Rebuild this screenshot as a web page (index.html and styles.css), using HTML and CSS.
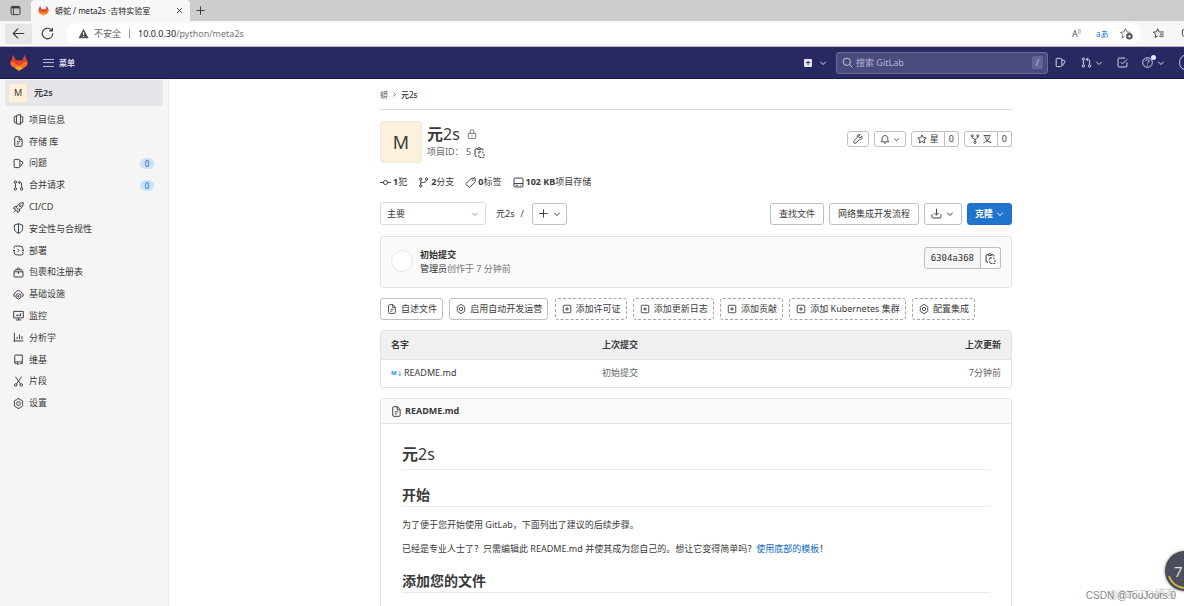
FILE: index.html
```html
<!DOCTYPE html>
<html lang="zh-CN">
<head>
<meta charset="utf-8">
<title>蟒蛇 / meta2s ·吉特实验室</title>
<link rel="stylesheet" href="styles.css">
</head>
<body>
<svg class="sprite" aria-hidden="true">
  <symbol id="tanuki" viewBox="0 0 24 22"><path fill="#e24329" d="M4.500.5 7.500 8h9L19.500.5 23 9.500 12 16 1 9.500z"/><path fill="#fc6d26" d="M1 9.300c-1.200 3.200 0 5.700 2.300 7.500L12 22l8.700-5.200c2.300-1.800 3.500-4.300 2.300-7.500-2.500.3-4 1.200-5.500 2.200L12 15.500 6.500 11.500C5 10.500 3.500 9.600 1 9.300"/><path fill="#fca326" d="m7 18.500 5-3.500 5 3.500-5 3.500z"/></symbol>
  <symbol id="chev" viewBox="0 0 16 16"><path d="m2.500 5.500 5.500 5.500 5.500-5.500"/></symbol>
  <symbol id="chev-r" viewBox="0 0 16 16"><path d="m6 3.500 4.500 4.500L6 12.500"/></symbol>
  <symbol id="info" viewBox="0 0 16 16"><path d="M5 2.500v11L1.800 12V4zM5 2l6-1.200v14.400L5 14M11 2.500 14.200 4v8L11 13.500"/></symbol>
  <symbol id="doc" viewBox="0 0 16 16"><path d="M4 1h5.500L13.300 5v8.500A1.500 1.500 0 0 1 11.800 15H4a1.500 1.500 0 0 1-1.500-1.500v-11A1.500 1.500 0 0 1 4 1M9 1v4.500h4M5.500 8.500h5M5.500 11.500h3"/></symbol>
  <symbol id="issue" viewBox="0 0 16 16"><path d="M3 2h5a2 2 0 0 1 2 2v8a2 2 0 0 1-2 2H3a1.300 1.300 0 0 1-1.300-1.300V3.300A1.300 1.300 0 0 1 3 2M10 4l4 1.500a1 1 0 0 1 .5 1.300L11 12.500"/></symbol>
  <symbol id="mr" viewBox="0 0 16 16"><circle cx="3.500" cy="3" r="1.700"/><circle cx="3.500" cy="13" r="1.700"/><circle cx="12.500" cy="13" r="1.700"/><path d="M3.500 4.700v6.600M12.500 11.300V5.500a2 2 0 0 0-2-2H8M10 1 7.700 3.500 10 6"/></symbol>
  <symbol id="rocket" viewBox="0 0 16 16"><path d="M5 8c1-4 4.500-7 10-7 0 5.500-3 9-7 10zM5.500 6.500 2 7l-1 3 3.500.2M9.500 10.500 9 14l-3 1-.2-3.500M1 15l3.500-3.500"/><circle cx="10.500" cy="5.500" r="1.300"/></symbol>
  <symbol id="shield" viewBox="0 0 16 16"><path d="M8 1 2 3v5c0 3.500 2.500 5.500 6 7 3.500-1.500 6-3.500 6-7V3zM8 1v14"/></symbol>
  <symbol id="deploy" viewBox="0 0 16 16"><path d="M1.500 5V3.500a2 2 0 0 1 2-2H10a4.500 4.500 0 0 1 4.500 4.500v1M14.500 9.500v3a2 2 0 0 1-2 2H6A4.500 4.500 0 0 1 1.500 10V9M6.500 5.500 9 8l-2.500 2.500M0 8h3M13 8h3"/></symbol>
  <symbol id="package" viewBox="0 0 16 16"><path d="M1.500 7h13v6.500a1 1 0 0 1-1 1h-11a1 1 0 0 1-1-1zM1.500 7l2-3h9l2 3M5.500 4c0-3.500 5-3.500 5 0M8 7v3"/></symbol>
  <symbol id="cloud" viewBox="0 0 16 16"><path d="M3 11.500C.5 10.500.3 7 3 6.200 4 1.500 11.500.8 12.700 6.200c3 .5 3 4.300.5 5.300"/><path d="m8 6.500 3.500 2v4L8 14.700l-3.500-2.200v-4z"/><circle cx="8" cy="10.500" r="1"/></symbol>
  <symbol id="monitor" viewBox="0 0 16 16"><path d="M1 2h14v9.500H1zM8 11.500v3M4 14.500h8M5 9V7.500M7 9V6M9 9V7M11 9V4.500"/></symbol>
  <symbol id="chart" viewBox="0 0 16 16"><path d="M2 1v13M1 13h14M6 10.500V7M9.500 10.500V3.500M13 10.500V6"/></symbol>
  <symbol id="book" viewBox="0 0 16 16"><path d="M13.500 11.500V1.500H4a1.500 1.500 0 0 0-1.500 1.500v9.500A1.500 1.500 0 0 0 4 14h1M2.500 12.500a1.300 1.300 0 0 1 1.300-1h9.700V14H10M6.500 12v3.500l1.200-1 1.300 1"/></symbol>
  <symbol id="scissors" viewBox="0 0 16 16"><path d="m3.500 1 7.500 10.500M12.500 1 5 11.500"/><circle cx="4" cy="13" r="1.800"/><circle cx="12" cy="13" r="1.800"/></symbol>
  <symbol id="gear" viewBox="0 0 16 16"><path stroke-linejoin="round" d="M6.500 1h3l1 1.700 2 .2 1.800 2.700L13.500 8l.8 2.400-1.800 2.700-2 .2-1 1.700h-3l-1-1.700-2-.2-1.800-2.700L2.500 8l-.8-2.400 1.800-2.700 2-.2z"/><circle cx="8" cy="8" r="2.700"/></symbol>
  <symbol id="lock" viewBox="0 0 16 16"><rect x="2" y="7" width="12" height="8" rx="1"/><path d="M4.800 7V4.500a3.200 3.200 0 0 1 6.400 0V7M8 10v2"/></symbol>
  <symbol id="copy" viewBox="0 0 16 16"><path d="M4.500 2.500H3A1.500 1.500 0 0 0 1.500 4v8A1.500 1.500 0 0 0 3 13.500h1.500M10 2.500h1.500A1.500 1.500 0 0 1 13 4v1M5 3.500V2l2.200-1.300L9.500 2v1.500z"/><path stroke-dasharray="3 1.500" d="M7 7h5l2.500 2.500v5.700H7z"/></symbol>
  <symbol id="commit" viewBox="0 0 16 16"><circle cx="8" cy="8" r="3"/><path d="M0 8h5M11 8h5"/></symbol>
  <symbol id="branch" viewBox="0 0 16 16"><circle cx="4" cy="3" r="1.700"/><circle cx="4" cy="13" r="1.700"/><circle cx="12.500" cy="3" r="1.700"/><path d="M4 4.700v6.600M4 9.500c0-2.500 8.500-.5 8.500-4.800"/></symbol>
  <symbol id="tag" viewBox="0 0 16 16"><path d="m1.500 9.500 7-7L14.500 1l.5 6-7.500 7.500a1.500 1.500 0 0 1-2 0l-4-3.500a1 1 0 0 1 0-1.500"/><circle cx="11.500" cy="4.500" r=".5"/></symbol>
  <symbol id="disk" viewBox="0 0 16 16"><rect x="1.500" y="1.500" width="13" height="13" rx="1.500"/><path d="M1.500 9.500h13M4 12h3M11 12h1"/></symbol>
  <symbol id="wrench" viewBox="0 0 16 16"><path d="M14 3.500 11.500 6l-2-.5L9 3.500 11.500 1C8.500.3 6 2.500 6.700 5.500L1.500 11c-2 2.200 1.200 5.300 3.300 3.400L10 9c3.500.7 5.500-2.500 4-5.500M3.500 12.500h.1"/></symbol>
  <symbol id="bell" viewBox="0 0 16 16"><path d="M2 12.500h12L12.500 10V7c0-6-9-6-9 0v3zM6.500 14.500h3"/></symbol>
  <symbol id="star" viewBox="0 0 16 16"><path d="m8 1.500 2 4.300 4.800.6-3.600 3.200 1 4.700L8 12l-4.200 2.300 1-4.700L1.200 6.400 6 5.800z"/></symbol>
  <symbol id="fork" viewBox="0 0 16 16"><circle cx="3.500" cy="3" r="1.700"/><circle cx="12.500" cy="3" r="1.700"/><circle cx="8" cy="13.500" r="1.700"/><path d="M3.500 4.700c0 3 4.500 2 4.500 5v2M12.500 4.700c0 3-4.500 2-4.500 5"/></symbol>
  <symbol id="plus" viewBox="0 0 16 16"><path d="M8 2v12M2 8h12"/></symbol>
  <symbol id="plus-box" viewBox="0 0 16 16"><rect x="2" y="2" width="12" height="12" rx="1"/><path d="M8 5v6M5 8h6"/></symbol>
  <symbol id="download" viewBox="0 0 16 16"><path d="M8 1v9M4.500 7 8 10.500 11.500 7M1.500 9v4a1.500 1.500 0 0 0 1.500 1.500h10a1.500 1.500 0 0 0 1.500-1.500V9"/></symbol>
  <symbol id="search" viewBox="0 0 16 16"><circle cx="7" cy="7" r="5.300"/><path d="m11 11 4 4"/></symbol>
  <symbol id="todo" viewBox="0 0 16 16"><path d="M14.500 8v5a1.500 1.500 0 0 1-1.500 1.500H3A1.500 1.500 0 0 1 1.500 13V3A1.500 1.500 0 0 1 3 1.500h9M5.500 7.500 8 10l6.500-6.500"/></symbol>
  <symbol id="help" viewBox="0 0 16 16"><circle cx="8" cy="8" r="7"/><path d="M5.500 6c.3-3 5-2.500 5 0 0 1.700-2.500 1.500-2.500 3.500M8 11v1.500"/></symbol>
  <symbol id="back" viewBox="0 0 16 16"><path d="M15 8H1.500M7.500 2l-6 6 6 6"/></symbol>
  <symbol id="reload" viewBox="0 0 16 16"><path d="M14.500 8A6.500 6.500 0 1 1 12 2.900L13.500 4.500M14 .8v4h-4"/></symbol>
  <symbol id="close" viewBox="0 0 16 16"><path d="m2.500 2.500 11 11M13.500 2.500l-11 11"/></symbol>
  <symbol id="window" viewBox="0 0 16 16"><rect x="1.500" y="2" width="13" height="12" rx="2"/><path stroke-width="3" d="M2 3.500h12"/><path d="M5 5v9"/></symbol>
  <symbol id="warn" viewBox="0 0 16 16"><path class="solid" d="M8 1 15.500 15H.5z"/><path stroke="#fff" d="M8 6v4M8 11.500V13"/></symbol>
  <symbol id="starplus" viewBox="0 0 16 16"><path stroke-width="1" d="m5.500 12-2.700 1.500.7-4L.7 6.600l4-.6 1.900-3.900L8.500 6l4.200.6"/><circle class="solid" cx="11.500" cy="11.500" r="4"/><path stroke="#fff" stroke-width="1" d="M11.500 9.500v4M9.500 11.500h4"/></symbol>
  <symbol id="starlist" viewBox="0 0 16 16"><path d="M9 5.500 6.800 1.200 5 5.500l-4.500.6L4 9.300l-.8 4.400L7 11.500M9 5.800h6.500M10 9h5.500M9 12h6.500"/></symbol>
</svg>

<header class="browser">
  <div class="tabstrip">
    <button class="plain tab-menu" aria-label="标签页操作"><svg class="icon"><use href="#window"/></svg></button>
    <div class="tab">
      <svg class="icon fill"><use href="#tanuki"/></svg>
      <span class="tab-title">蟒蛇 / meta2s ·吉特实验室</span>
      <button class="plain" aria-label="关闭"><svg class="icon tiny"><use href="#close"/></svg></button>
    </div>
    <button class="plain" aria-label="新标签页"><svg class="icon"><use href="#plus"/></svg></button>
  </div>
  <div class="toolbar">
    <button class="plain back" aria-label="返回"><svg class="icon big"><use href="#back"/></svg></button>
    <button class="plain" aria-label="刷新"><svg class="icon big"><use href="#reload"/></svg></button>
    <div class="address">
      <svg class="icon muted"><use href="#warn"/></svg>
      <span class="insecure">不安全</span>
      <span class="url"><b>10.0.0.30</b>/python/meta2s</span>
      <span class="read">A<sup>))</sup></span>
      <span class="translate">aあ</span>
      <svg class="icon muted big"><use href="#starplus"/></svg>
    </div>
    <button class="plain favs" aria-label="收藏夹"><svg class="icon"><use href="#starlist"/></svg></button>
    <button class="plain cut" aria-label="集锦"><svg class="icon"><use href="#shield"/></svg></button>
  </div>
</header>

<nav class="navbar">
  <a href="#" class="logo" aria-label="GitLab"><svg><use href="#tanuki"/></svg></a>
  <button class="plain menu"><span class="burger"></span>菜单</button>
  <div class="nav-right">
    <button class="plain create" aria-label="新建"><span class="newbox">+</span><svg class="icon small"><use href="#chev"/></svg></button>
    <div class="search">
      <svg class="icon"><use href="#search"/></svg>
      <input type="text" placeholder="搜索 GitLab" aria-label="搜索 GitLab">
      <kbd>/</kbd>
    </div>
    <a href="#" class="n-issue" aria-label="议题"><svg class="icon"><use href="#issue"/></svg></a>
    <button class="plain n-mr" aria-label="合并请求"><svg class="icon"><use href="#mr"/></svg><svg class="icon small"><use href="#chev"/></svg></button>
    <a href="#" class="n-todo" aria-label="待办"><svg class="icon"><use href="#todo"/></svg></a>
    <button class="plain n-help" aria-label="帮助"><svg class="icon"><use href="#help"/></svg><i class="dot"></i><svg class="icon small"><use href="#chev"/></svg></button>
    <span class="user"></span>
  </div>
</nav>

<div class="layout">
  <aside class="sidebar">
    <a href="#" class="context"><span class="mini">M</span>元2s</a>
    <ul class="side-list">
      <li><a href="#"><svg class="icon"><use href="#info"/></svg>项目信息</a></li>
      <li><a href="#"><svg class="icon"><use href="#doc"/></svg>存储 库</a></li>
      <li><a href="#"><svg class="icon"><use href="#issue"/></svg>问题<span class="badge">0</span></a></li>
      <li><a href="#"><svg class="icon"><use href="#mr"/></svg>合并请求<span class="badge">0</span></a></li>
      <li><a href="#"><svg class="icon"><use href="#rocket"/></svg>CI/CD</a></li>
      <li><a href="#"><svg class="icon"><use href="#shield"/></svg>安全性与合规性</a></li>
      <li><a href="#"><svg class="icon"><use href="#deploy"/></svg>部署</a></li>
      <li><a href="#"><svg class="icon"><use href="#package"/></svg>包裹和注册表</a></li>
      <li><a href="#"><svg class="icon"><use href="#cloud"/></svg>基础设施</a></li>
      <li><a href="#"><svg class="icon"><use href="#monitor"/></svg>监控</a></li>
      <li><a href="#"><svg class="icon"><use href="#chart"/></svg>分析学</a></li>
      <li><a href="#"><svg class="icon"><use href="#book"/></svg>维基</a></li>
      <li><a href="#"><svg class="icon"><use href="#scissors"/></svg>片段</a></li>
      <li><a href="#"><svg class="icon"><use href="#gear"/></svg>设置</a></li>
    </ul>
  </aside>

  <main class="main">
    <div class="content">
      <div class="crumbs"><a href="#">蟒</a><svg class="icon tiny"><use href="#chev-r"/></svg><a href="#" class="here">元2s</a></div>

      <section class="project">
        <div class="avatar">M</div>
        <div class="ident">
          <h1>元<span>2s</span><svg class="icon"><use href="#lock"/></svg></h1>
          <div class="pid">项目ID： 5<button class="plain" aria-label="复制项目ID"><svg class="icon"><use href="#copy"/></svg></button></div>
        </div>
        <div class="actions">
          <button class="btn sm" aria-label="设置"><svg class="icon"><use href="#wrench"/></svg></button>
          <button class="btn sm" aria-label="通知"><svg class="icon"><use href="#bell"/></svg><svg class="icon small"><use href="#chev"/></svg></button>
          <div class="group"><button class="btn sm"><svg class="icon"><use href="#star"/></svg>星</button><a href="#" class="btn sm">0</a></div>
          <div class="group"><button class="btn sm"><svg class="icon"><use href="#fork"/></svg>叉</button><a href="#" class="btn sm">0</a></div>
        </div>
      </section>

      <div class="stats">
        <a href="#"><svg class="icon"><use href="#commit"/></svg><span><b>1</b>犯</span></a>
        <a href="#"><svg class="icon"><use href="#branch"/></svg><span><b>2</b>分支</span></a>
        <a href="#"><svg class="icon"><use href="#tag"/></svg><span><b>0</b>标签</span></a>
        <a href="#"><svg class="icon"><use href="#disk"/></svg><span><b>102 KB</b>项目存储</span></a>
      </div>

      <div class="tree">
        <div class="picker">
          <select aria-label="分支"><option>主要</option></select>
          <svg class="icon small"><use href="#chev"/></svg>
        </div>
        <span class="path"><a href="#">元2s</a><span>/</span></span>
        <button class="btn add" aria-label="添加"><svg class="icon"><use href="#plus"/></svg><svg class="icon small"><use href="#chev"/></svg></button>
        <div class="tree-right">
          <a href="#" class="btn">查找文件</a>
          <button class="btn">网络集成开发流程</button>
          <button class="btn" aria-label="下载"><svg class="icon"><use href="#download"/></svg><svg class="icon small"><use href="#chev"/></svg></button>
          <button class="btn primary">克隆<svg class="icon small"><use href="#chev"/></svg></button>
        </div>
      </div>

      <section class="last-commit">
        <span class="face"></span>
        <div class="msg"><a href="#" class="subject">初始提交</a><div><a href="#" class="who">管理员</a>创作于 7 分钟前</div></div>
        <div class="group sha"><span class="btn mono">6304a368</span><button class="btn" aria-label="复制提交SHA"><svg class="icon"><use href="#copy"/></svg></button></div>
      </section>

      <div class="quick">
        <a href="#" class="btn"><svg class="icon"><use href="#doc"/></svg>自述文件</a>
        <a href="#" class="btn"><svg class="icon"><use href="#gear"/></svg>启用自动开发运营</a>
        <a href="#" class="btn dashed"><svg class="icon"><use href="#plus-box"/></svg>添加许可证</a>
        <a href="#" class="btn dashed"><svg class="icon"><use href="#plus-box"/></svg>添加更新日志</a>
        <a href="#" class="btn dashed"><svg class="icon"><use href="#plus-box"/></svg>添加贡献</a>
        <a href="#" class="btn dashed"><svg class="icon"><use href="#plus-box"/></svg>添加 Kubernetes 集群</a>
        <a href="#" class="btn dashed"><svg class="icon"><use href="#gear"/></svg>配置集成</a>
      </div>

      <div class="files">
        <table>
          <thead><tr><th>名字</th><th>上次提交</th><th class="right">上次更新</th></tr></thead>
          <tbody><tr><td><a href="#"><span class="md">M↓</span>README.md</a></td><td class="dim">初始提交</td><td class="right dim">7分钟前</td></tr></tbody>
        </table>
      </div>

      <article class="readme">
        <div class="readme-head"><svg class="icon"><use href="#doc"/></svg><a href="#">README.md</a></div>
        <div class="prose">
          <h1>元<span>2s</span></h1>
          <h2>开始</h2>
          <p>为了便于您开始使用 GitLab，下面列出了建议的后续步骤。</p>
          <p>已经是专业人士了？只需编辑此 README.md 并使其成为您自己的。想让它变得简单吗？<a href="#">使用底部的模板</a>！</p>
          <h2>添加您的文件</h2>
        </div>
      </article>
    </div>
  </main>
</div>

<div class="bubble"><span>7</span><svg viewBox="0 0 40 40"><path d="M4 25a17 17 0 0 0 16 12"/></svg></div>
<div class="mark under">@51CTO博客</div>
<div class="mark">CSDN @TouJours 0</div>
</body>
</html>
```
FILE: styles.css
```css
* { box-sizing: border-box; }
body {
  margin: 0; height: 100vh; overflow: hidden; position: relative;
  display: flex; flex-direction: column;
  font: 9px/14px "Noto Sans", "Noto Sans CJK SC", sans-serif;
  color: #3a3a3a; background: #fff;
}
a { color: inherit; text-decoration: none; }
h1, h2, p, ul { margin: 0; padding: 0; }
button, input, select { font: inherit; color: inherit; }
.sprite { position: absolute; width: 0; height: 0; }
.icon { width: 11px; height: 11px; flex: none; fill: none; stroke: currentColor; stroke-width: 1.4; display: block; }
.icon.small { width: 8px; height: 8px; stroke-width: 2; }
.icon.tiny { width: 7px; height: 7px; stroke-width: 2; }
.icon.big { width: 13px; height: 13px; }
.icon.fill { stroke: none; }
.icon.muted { color: #555; }
.solid { fill: currentColor; stroke: none; }
.plain { border: 0; background: none; padding: 0; display: flex; align-items: center; }

/* browser chrome */
.tabstrip { height: 21px; background: #cdcdcd; display: flex; align-items: stretch; }
.tab-menu { width: 31px; justify-content: center; }
.tab { width: 159px; margin-right: 5px; padding: 0 7px; display: flex; align-items: center; gap: 6px; background: #f7f7f7; border-radius: 4px 4px 0 0; color: #222; }
.tab-title { flex: 1; font-size: 8px; white-space: nowrap; }
.toolbar { height: 26px; background: #f7f7f7; border-bottom: 1px solid #b5b5c0; padding-left: 5px; display: flex; align-items: center; gap: 9px; overflow: hidden; }
.back { width: 27px; height: 20px; justify-content: center; background: #e6e6e6; border-radius: 2px; }
.address { flex: 1; height: 21px; margin-left: 3px; padding: 0 8px 0 12px; display: flex; align-items: center; background: #fff; border-radius: 11px; }
.insecure { margin-left: 5px; padding-right: 8px; border-right: 1px solid #999; line-height: 9px; color: #666; }
.url { margin-left: 8px; flex: 1; color: #777; }
.url b { font-weight: 400; color: #222; }
.read { width: 24px; color: #555; }
.read sup { font-size: 5px; line-height: 0; }
.translate { width: 24px; color: #0078d4; font-size: 8px; }
.favs { margin-left: 3px; }
.cut { margin-left: 8px; margin-right: -8px; }

/* top navigation */
.navbar { height: 32px; flex: none; padding-left: 10px; display: flex; align-items: center; background: #292961; border-bottom: 1px solid #16163f; color: #dcdcf0; overflow: hidden; }
.logo svg { width: 18px; height: 17px; display: block; }
.menu { margin-left: 15px; gap: 5px; font-size: 8px; font-weight: 700; }
.burger { width: 11px; height: 8px; border: solid #b9b9dc; border-width: 1px 0; background: linear-gradient(#b9b9dc, #b9b9dc) center / 100% 1px no-repeat; }
.nav-right { margin-left: auto; display: flex; align-items: center; }
.create { gap: 7px; margin-right: 9px; }
.newbox { width: 8px; height: 8px; border-radius: 1px; background: #e6e6f8; color: #292961; font-size: 8px; line-height: 8px; font-weight: 700; text-align: center; }
.search { width: 212px; height: 22px; padding: 0 4px 0 5px; display: flex; align-items: center; gap: 3px; border: 1px solid #6b6b9b; border-radius: 3px; background: #4c4b7e; color: #c9c9e4; }
.search input { flex: 1; min-width: 0; border: 0; padding: 0; background: none; outline: none; }
.search input::placeholder { color: #b4b4d8; opacity: 1; }
.search kbd { width: 11px; height: 13px; border-radius: 2px; background: #66659a; font: inherit; line-height: 13px; text-align: center; }
.n-issue { margin-left: 7px; }
.n-mr { margin-left: 15px; gap: 3px; }
.n-todo { margin-left: 14px; }
.n-help { margin-left: 14px; gap: 4px; position: relative; }
.dot { position: absolute; left: 9px; top: -2px; width: 5px; height: 5px; border-radius: 50%; background: #e6e6f8; }
.user { width: 17px; height: 17px; margin: 0 -12px 0 14px; border: 1px solid #c9c9e4; border-radius: 50%; }

/* layout */
.layout { flex: 1; min-height: 0; display: flex; }
.sidebar { width: 169px; flex: none; background: #f5f5f5; border-right: 1px solid #e9e9e9; padding: 1px 5px 0; }
.context { height: 26px; padding-left: 3px; display: flex; align-items: center; gap: 6px; border-radius: 3px; background: #e5e5ea; font-weight: 600; }
.mini { width: 20px; height: 20px; border: 1px solid #f2e3cd; border-radius: 3px; background: #fdf1dd; line-height: 18px; text-align: center; font-weight: 400; }
.side-list { list-style: none; margin-top: 3px; height: 305px; display: grid; grid-auto-rows: 1fr; }
.side-list a { height: 100%; display: flex; align-items: center; gap: 5px; padding: 0 9px 0 8px; }
.badge { margin-left: auto; width: 14px; height: 11px; border-radius: 6px; background: #cbe2f9; color: #1068bf; font-size: 8px; line-height: 11px; text-align: center; }
.main { flex: 1; min-width: 0; padding-left: 39px; display: flex; justify-content: center; overflow: hidden; }
.content { width: 100%; max-width: 632px; }

.crumbs { height: 31px; padding-top: 1px; display: flex; align-items: center; gap: 3px; border-bottom: 1px solid #dcdcdc; font-size: 8px; color: #666; }
.here { color: #303030; font-weight: 500; }
.project { margin-top: 11px; display: flex; gap: 5px; }
.avatar { width: 42px; height: 42px; border: 1px solid #efe6da; border-radius: 4px; background: #fdf1dd; font-size: 18px; line-height: 41px; text-align: center; }
.ident h1 { height: 24px; padding-top: 2px; display: flex; align-items: center; font-size: 16px; }
.ident h1 span, .prose h1 span { font-weight: 400; }
.ident h1 .icon { width: 10px; height: 10px; margin-left: 7px; color: #666; }
.pid { display: flex; gap: 3px; color: #666; white-space: pre; }
.pid button { color: #303030; }
.actions { margin: 10px 0 0 auto; display: flex; gap: 5px; align-items: flex-start; }
.btn { height: 22px; padding: 0 7px; display: flex; align-items: center; gap: 4px; border: 1px solid #bfbfbf; border-radius: 3px; background: #fff; white-space: nowrap; }
.btn.sm { height: 16px; padding: 0 5px; gap: 3px; }
.btn.sm .icon { width: 10px; height: 10px; }
.btn.sm .icon.small { width: 7px; height: 7px; }
.group { display: flex; }
.group > :first-child { border-radius: 3px 0 0 3px; }
.group > :last-child { border-radius: 0 3px 3px 0; border-left: 0; }
.group > a.sm { padding: 0 4px; }

.stats { margin-top: 12px; display: flex; gap: 11px; }
.stats a { display: flex; align-items: center; gap: 2px; }
.tree { margin-top: 13px; display: flex; align-items: center; }
.picker { width: 106px; display: grid; align-items: center; }
.picker > * { grid-area: 1 / 1; }
.picker select { width: 100%; height: 23px; padding: 0 6px; appearance: none; border: 1px solid #dcdcdc; border-radius: 3px; background: #fff; }
.picker .icon { justify-self: end; margin-right: 7px; color: #999; }
.path { margin: 0 8px 0 10px; display: flex; gap: 6px; }
.add { padding: 0 5px; }
.tree-right { margin-left: auto; display: flex; gap: 5px; }
.tree-right .icon:first-child { margin-left: -1px; }
.primary { border-color: #1f6fc8; background: #1f75cb; color: #fff; font-weight: 600; }
.tree-right a.btn, .tree-right a + .btn { padding: 0 8px; }

.last-commit { margin-top: 11px; padding: 10px; height: 52px; display: flex; align-items: flex-start; border: 1px solid #e3e3e3; border-radius: 3px; background: #fafafa; color: #777; }
.face { width: 22px; height: 22px; margin: 3px 7px 0 0; border: 1px solid #e6e6e6; border-radius: 50%; background: #fff; }
.msg { padding-top: 1px; }
.subject { color: #303030; font-weight: 600; }
.who { color: #303030; }
.sha { margin-left: auto; color: #303030; }
.sha .btn { padding: 0 4px; }
.sha .mono { padding: 0 6px; background: #f7f7f7; font-family: "DejaVu Sans Mono", monospace; }
.quick { margin-top: 10px; display: flex; justify-content: space-between; padding-right: 37px; }
.quick .btn { padding: 0 5px; }
.quick .btn .icon { margin-left: 1px; width: 10px; height: 10px; }
.dashed { border-style: dashed; border-color: #a5a5a5; }

.files { margin-top: 10px; border: 1px solid #e3e3e3; border-radius: 3px; overflow: hidden; }
.files table { width: 100%; border-collapse: collapse; table-layout: fixed; }
.files th, .files td { height: 28px; padding: 0 10px; text-align: left; }
.files th:first-child { width: 211px; }
.files th { background: #f0f0f0; border-bottom: 1px solid #e3e3e3; font-weight: 600; }
.files .right { text-align: right; }
.files td a { display: flex; align-items: center; gap: 3px; }
.dim, .files td.dim { color: #666; }
.md { width: 10px; color: #1f8fe8; font-size: 6px; font-weight: 700; white-space: nowrap; }

.readme { margin-top: 10px; border: 1px solid #e3e3e3; border-radius: 3px; }
.readme-head { height: 25px; padding-left: 10px; display: flex; align-items: center; gap: 3px; background: #fafafa; border-bottom: 1px solid #e3e3e3; font-weight: 700; }
.prose { padding: 21px; }
.prose h1 { height: 25px; border-bottom: 1px solid #eaeaea; font-size: 16px; line-height: 19px; }
.prose h2 { height: 22px; margin-top: 15px; border-bottom: 1px solid #eaeaea; font-size: 14px; line-height: 19px; }
.prose p { margin-top: 11px; }
.prose p + p { margin-top: 10px; }
.prose p a { color: #1068bf; }

/* floating overlays */
.bubble { position: absolute; right: -21px; bottom: 15px; width: 40px; height: 40px; border-radius: 50%; background: #4b4f5c; box-shadow: 0 0 3px #777; color: #ddd; }
.bubble span { position: absolute; left: 9px; top: 10px; font-size: 15px; line-height: 20px; }
.bubble svg { display: block; fill: none; stroke: #e5c534; stroke-width: 1.5; }
.mark { position: absolute; right: 8px; bottom: 3px; font-family: "Liberation Sans", "Noto Sans CJK SC", sans-serif; font-size: 10px; color: #888; }
.mark.under { bottom: 5px; font-size: 11px; color: #d0d0d0; }
```
